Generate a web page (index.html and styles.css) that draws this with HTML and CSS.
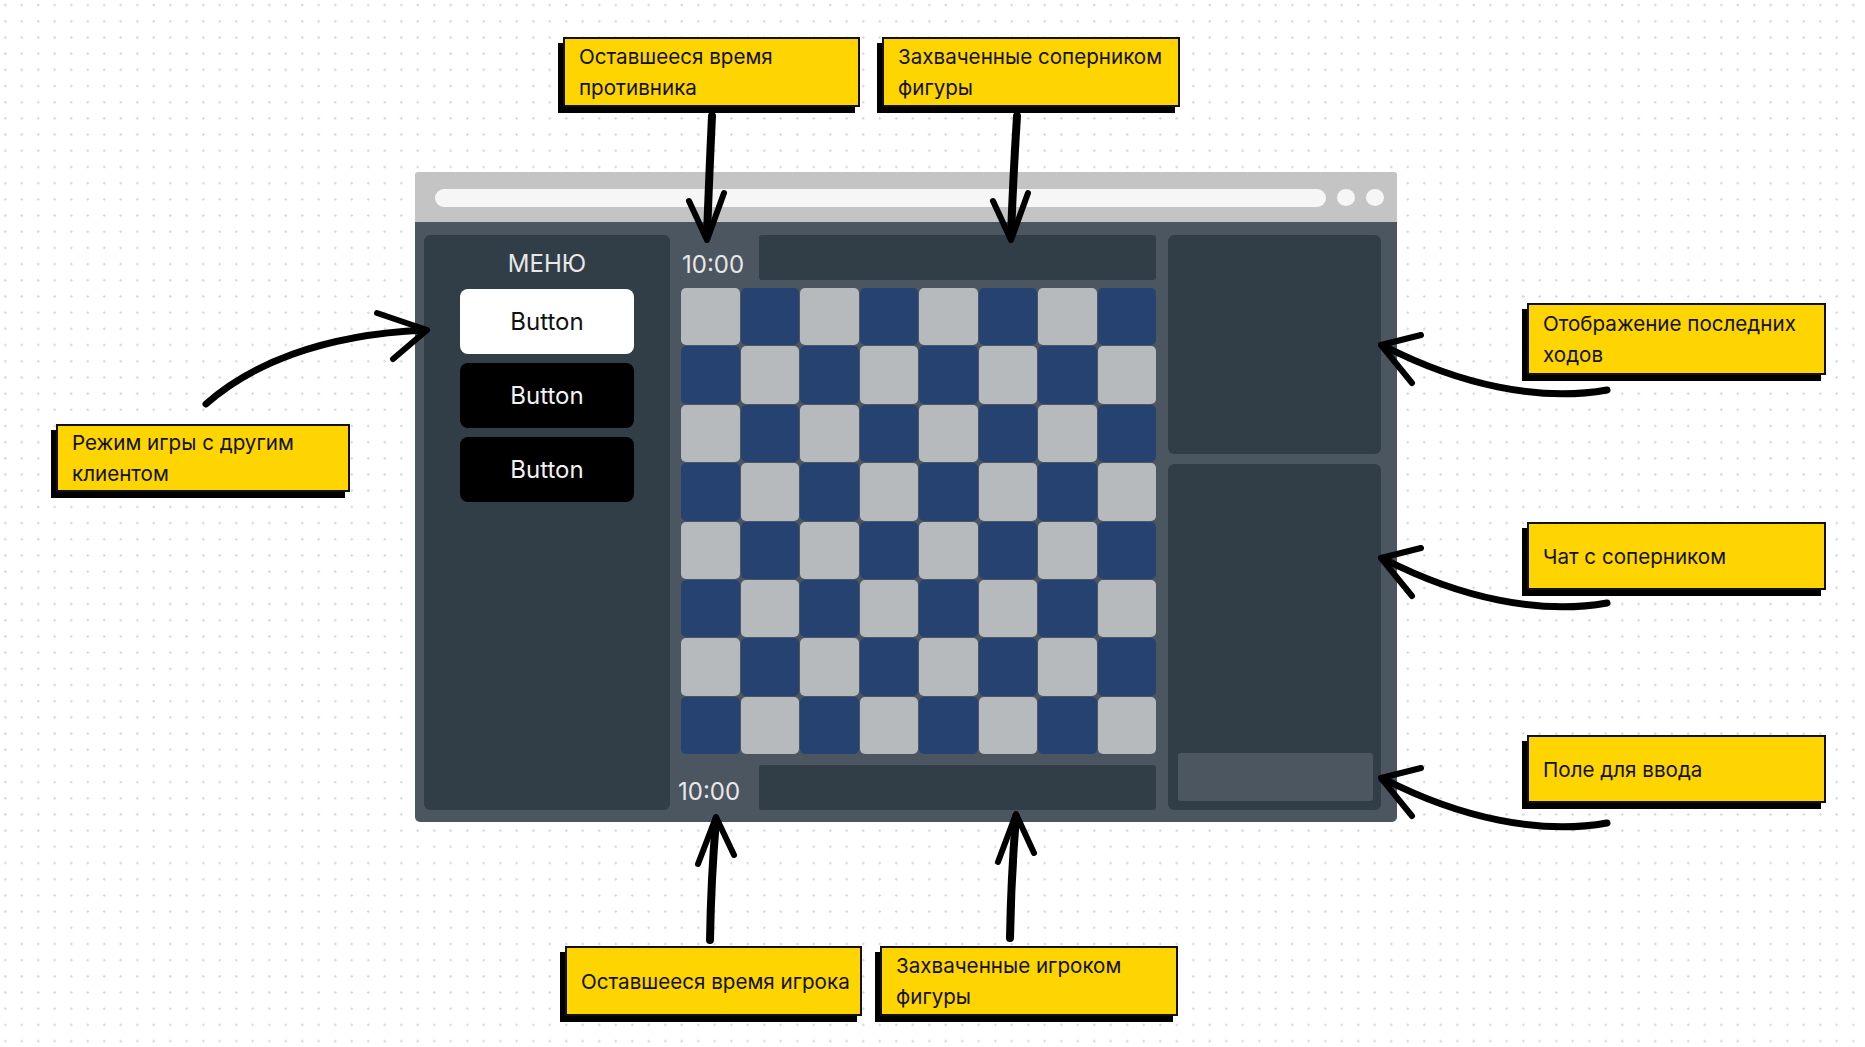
FILE: index.html
```html
<!DOCTYPE html>
<html lang="ru">

<head>
    <meta charset="UTF-8">
    <meta name="viewport" content="width=device-width, initial-scale=1.0">
    <title>Шахматы: схема интерфейса</title>
    <link rel="stylesheet" href="styles.css">
</head>

<body>
    <div class="canvas">

        <!-- Browser window mockup -->
        <div class="browser">
            <div class="browser-bar">
                <div class="address"></div>
                <span class="dot"></span>
                <span class="dot"></span>
            </div>

            <div class="browser-body">
                <!-- Left menu -->
                <div class="menu">
                    <div class="menu-title">МЕНЮ</div>
                    <button class="btn btn-light">Button</button>
                    <button class="btn btn-dark">Button</button>
                    <button class="btn btn-dark">Button</button>
                </div>

                <!-- Timers, captured pieces and the board -->
                <div class="game">
                    <div class="timer timer-top">10:00</div>
                    <div class="captured"></div>
                    <div class="board">
                        <div class="cell"></div><div class="cell"></div><div class="cell"></div><div class="cell"></div><div class="cell"></div><div class="cell"></div><div class="cell"></div><div class="cell"></div>
                        <div class="cell"></div><div class="cell"></div><div class="cell"></div><div class="cell"></div><div class="cell"></div><div class="cell"></div><div class="cell"></div><div class="cell"></div>
                        <div class="cell"></div><div class="cell"></div><div class="cell"></div><div class="cell"></div><div class="cell"></div><div class="cell"></div><div class="cell"></div><div class="cell"></div>
                        <div class="cell"></div><div class="cell"></div><div class="cell"></div><div class="cell"></div><div class="cell"></div><div class="cell"></div><div class="cell"></div><div class="cell"></div>
                        <div class="cell"></div><div class="cell"></div><div class="cell"></div><div class="cell"></div><div class="cell"></div><div class="cell"></div><div class="cell"></div><div class="cell"></div>
                        <div class="cell"></div><div class="cell"></div><div class="cell"></div><div class="cell"></div><div class="cell"></div><div class="cell"></div><div class="cell"></div><div class="cell"></div>
                        <div class="cell"></div><div class="cell"></div><div class="cell"></div><div class="cell"></div><div class="cell"></div><div class="cell"></div><div class="cell"></div><div class="cell"></div>
                        <div class="cell"></div><div class="cell"></div><div class="cell"></div><div class="cell"></div><div class="cell"></div><div class="cell"></div><div class="cell"></div><div class="cell"></div>
                    </div>
                    <div class="timer timer-bottom">10:00</div>
                    <div class="captured"></div>
                </div>

                <!-- Moves list and chat -->
                <div class="side">
                    <div class="panel moves"></div>
                    <div class="panel chat">
                        <div class="chat-input"></div>
                    </div>
                </div>
            </div>
        </div>

        <!-- Annotation notes -->
        <div class="note note-opp-time">Оставшееся время<br>противника</div>
        <div class="note note-opp-captured">Захваченные соперником<br>фигуры</div>
        <div class="note note-mode">Режим игры с другим<br>клиентом</div>
        <div class="note note-moves">Отображение последних<br>ходов</div>
        <div class="note note-chat">Чат с соперником</div>
        <div class="note note-input">Поле для ввода</div>
        <div class="note note-my-time">Оставшееся время игрока</div>
        <div class="note note-my-captured">Захваченные игроком<br>фигуры</div>

        <!-- Hand drawn arrows -->
        <svg class="arrows" width="1865" height="1047" viewBox="0 0 1865 1047">
            <g fill="none" stroke="#000" stroke-linecap="round" stroke-linejoin="round">
                <!-- to opponent timer -->
                <path class="shaft" d="M712 116 Q709 180 707 236" />
                <path class="head" d="M689 201 L707 240 L724 193" />
                <!-- to opponent captured pieces -->
                <path class="shaft" d="M1017 116 Q1013 180 1011 236" />
                <path class="head" d="M993 201 L1011 240 L1028 193" />
                <!-- to player timer -->
                <path class="shaft" d="M710 940 Q711 880 716 820" />
                <path class="head" d="M698 864 L716 817 L734 855" />
                <!-- to player captured pieces -->
                <path class="shaft" d="M1010 938 Q1011 878 1016 817" />
                <path class="head" d="M998 862 L1016 814 L1034 853" />
                <!-- to menu -->
                <path class="curve" d="M206 404 C250 365 320 335 424 330" />
                <path class="head" d="M377 313 L427 330 L393 359" />
                <!-- to moves list -->
                <path class="curve" d="M1607 390 C1540 402 1460 385 1384 346" />
                <path class="head" d="M1421 335 L1381 345 L1412 383" />
                <!-- to chat -->
                <path class="curve" d="M1607 603 C1540 615 1460 598 1384 559" />
                <path class="head" d="M1421 548 L1381 558 L1412 596" />
                <!-- to input field -->
                <path class="curve" d="M1607 823 C1540 835 1460 818 1384 779" />
                <path class="head" d="M1421 768 L1381 778 L1412 816" />
            </g>
        </svg>
    </div>
</body>

</html>
```

FILE: styles.css
```css
/* Page with a dotted canvas */
body {
    margin: 0;
    font-family: 'Inter', 'Noto Sans', sans-serif;
    background-color: #ffffff;
    background-image: radial-gradient(circle, #d8d8d8 1px, transparent 1.4px);
    background-size: 16.5px 16.2px;
    background-position: -3px -3px;
}

.canvas {
    position: relative;
    width: 1865px;
    height: 1047px;
    overflow: hidden;
}

/* Browser window */
.browser {
    position: absolute;
    left: 415px;
    top: 172px;
    width: 982px;
}

.browser-bar {
    height: 50px;
    box-sizing: border-box;
    padding: 0 13px 0 20px;
    display: flex;
    align-items: center;
    gap: 11px;
    background-color: #c4c4c4;
    border-radius: 3px 3px 0 0;
}

.address {
    flex: 1;
    height: 18px;
    margin-top: 2px;
    border-radius: 9px;
    background-color: #f6f6f6;
}

.dot {
    width: 18px;
    height: 17px;
    border-radius: 50%;
    background-color: #f6f6f6;
}

.browser-body {
    height: 600px;
    box-sizing: border-box;
    padding: 13px 15px 12px 9px;
    display: flex;
    background-color: #4c5661;
    border-radius: 0 0 5px 5px;
}

/* Menu column */
.menu {
    width: 246px;
    display: flex;
    flex-direction: column;
    align-items: center;
    background-color: #313e48;
    border-radius: 6px;
}

.menu-title {
    margin: 14px 0 10px;
    color: #e8e8e8;
    font-size: 24px;
    line-height: 30px;
}

.btn {
    width: 174px;
    height: 65px;
    margin-bottom: 9px;
    border: none;
    border-radius: 8px;
    font-family: inherit;
    font-size: 24px;
}

.btn-light {
    background-color: #ffffff;
    color: #111111;
}

.btn-dark {
    background-color: #000000;
    color: #f2f2f2;
}

/* Board column */
.game {
    width: 475px;
    margin-left: 11px;
    display: grid;
    grid-template-columns: 78px 1fr;
    grid-template-rows: 45px 485px 45px;
}

.timer {
    align-self: end;
    color: #e8e8e8;
    font-size: 24px;
    line-height: 30px;
}

.timer-top {
    margin: 0 0 0 1px;
}

.timer-bottom {
    margin: 0 0 3px -3px;
}

.captured {
    background-color: #313e48;
    border-radius: 3px;
}

.board {
    grid-column: 1 / 3;
    margin: 8px 0 11px;
    display: grid;
    grid-template-columns: repeat(8, 1fr);
    grid-template-rows: repeat(8, 1fr);
    gap: 1px;
}

.cell {
    background-color: #264270;
    border-radius: 5px;
}

.cell:nth-child(16n+1),
.cell:nth-child(16n+3),
.cell:nth-child(16n+5),
.cell:nth-child(16n+7),
.cell:nth-child(16n+10),
.cell:nth-child(16n+12),
.cell:nth-child(16n+14),
.cell:nth-child(16n+16) {
    background-color: #b6babd;
}

/* Right column */
.side {
    width: 213px;
    margin-left: 12px;
    display: flex;
    flex-direction: column;
    gap: 10px;
}

.panel {
    background-color: #313e48;
    border-radius: 6px;
}

.moves {
    height: 219px;
}

.chat {
    flex: 1;
    box-sizing: border-box;
    padding: 0 8px 9px 10px;
    display: flex;
    flex-direction: column;
    justify-content: flex-end;
}

.chat-input {
    height: 48px;
    background-color: #4c5661;
    border-radius: 3px;
}

/* Yellow notes */
.note {
    position: absolute;
    box-sizing: border-box;
    display: flex;
    align-items: center;
    padding: 0 8px 0 14px;
    background-color: #ffd500;
    border: 2px solid #111111;
    box-shadow: -5px 6px 0 #000000;
    color: #111111;
    font-size: 20.6px;
    line-height: 31px;
    white-space: nowrap;
}

.note-opp-time { left: 563px; top: 37px; width: 297px; height: 70px; }
.note-opp-captured { left: 882px; top: 37px; width: 298px; height: 70px; }
.note-mode { left: 56px; top: 424px; width: 294px; height: 68px; }
.note-moves { left: 1527px; top: 303px; width: 299px; height: 72px; }
.note-chat { left: 1527px; top: 522px; width: 299px; height: 68px; }
.note-input { left: 1527px; top: 735px; width: 299px; height: 68px; }
.note-my-time { left: 565px; top: 946px; width: 297px; height: 70px; }
.note-my-captured { left: 880px; top: 946px; width: 298px; height: 70px; }

/* Arrows overlay */
.arrows {
    position: absolute;
    left: 0;
    top: 0;
    pointer-events: none;
}

.shaft {
    stroke-width: 8;
}

.curve {
    stroke-width: 7;
}

.head {
    stroke-width: 6;
}
```
